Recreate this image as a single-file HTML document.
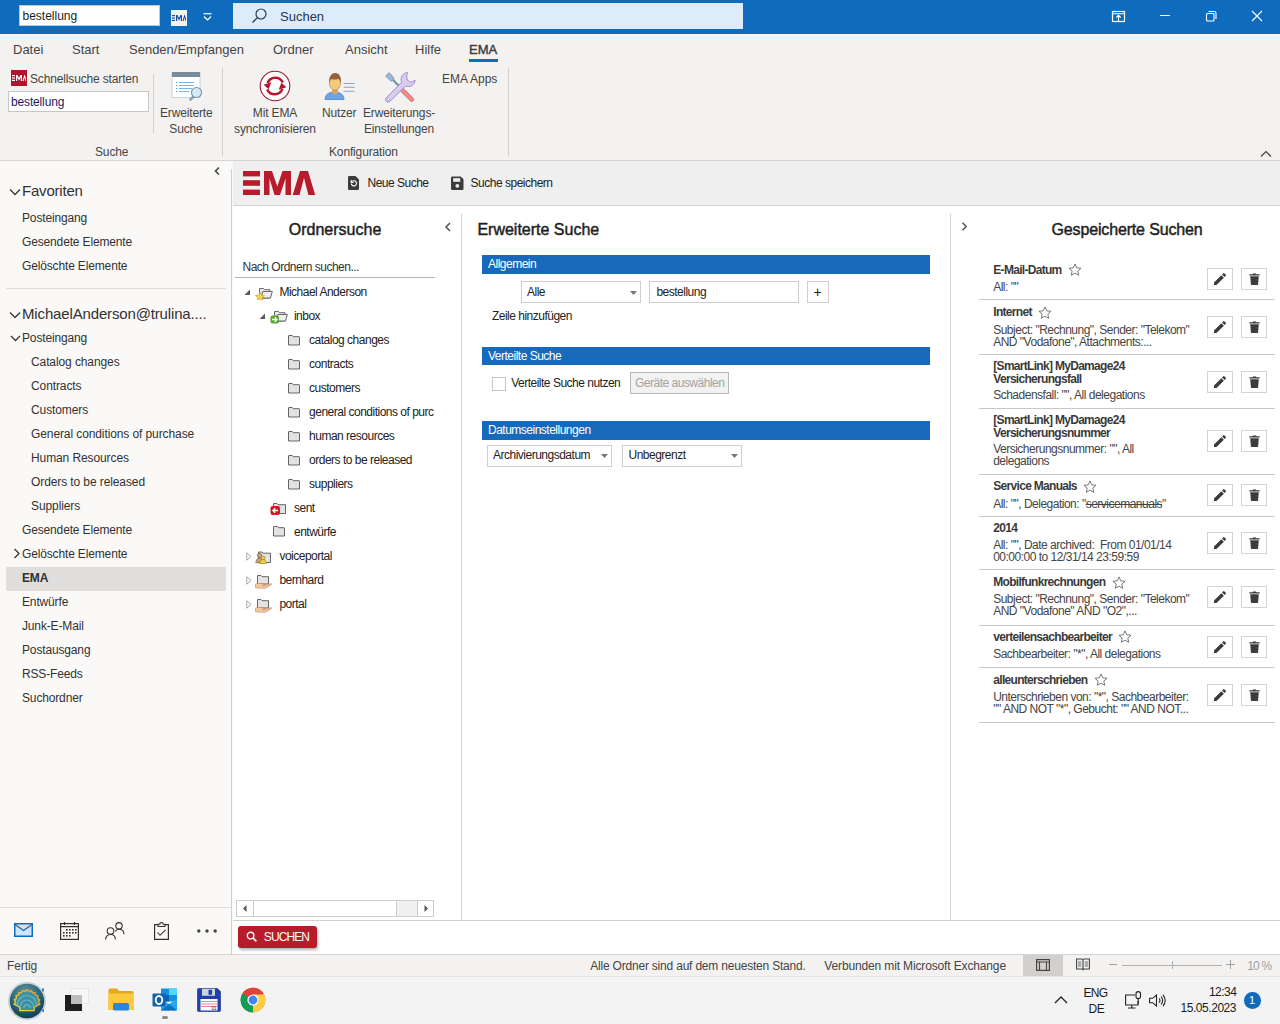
<!DOCTYPE html>
<html><head><meta charset="utf-8">
<style>
*{box-sizing:border-box;margin:0;padding:0}
html,body{width:1280px;height:1024px;overflow:hidden;background:#fff;font-family:"Liberation Sans",sans-serif;color:#262626}
.a{position:absolute;white-space:nowrap}
#title{position:absolute;left:0;top:0;width:1280px;height:34px;background:#0f6cbd}
#tabs{position:absolute;left:0;top:34px;width:1280px;height:30px;background:#f3f2f1}
#ribbon{position:absolute;left:0;top:64px;width:1280px;height:97px;background:#f3f2f1;border-bottom:1px solid #d6d5d4}
#nav{position:absolute;left:0;top:161px;width:233px;height:793px;background:#faf9f8}
#ema{position:absolute;left:233px;top:161px;width:1047px;height:793px;background:#fff}
#status{position:absolute;left:0;top:954px;width:1280px;height:22px;background:#f3f2f1;border-top:1px solid #d6d5d4}
#taskbar{position:absolute;left:0;top:976px;width:1280px;height:48px;background:#f3f3f3}
.tb{top:8px;font-size:13px;color:#444}
.rb{font-size:12px;color:#444;letter-spacing:-0.15px}
.seg{font-size:13px;color:#262626}
.nv{font-size:13px;color:#323130}
.ar{font-size:12px;color:#333}
</style></head><body>
<div id="title">
 <div class="a" style="left:19px;top:5px;width:141px;height:21px;background:#fff;border:1px solid #c8c6c4"></div>
 <div class="a" style="left:22.5px;top:10px;font-size:12px;line-height:12px;color:#201f1e">bestellung</div>
 <div class="a" style="left:171px;top:10px;width:16px;height:16px;background:#f3f2f1"></div>
 <svg class="a" style="left:172px;top:15px" width="14" height="6" viewBox="0 0 14 6"><g fill="#1a4fa0"><rect x="0" y="0" width="3" height="1.2"/><rect x="0" y="2.4" width="3" height="1.2"/><rect x="0" y="4.8" width="3" height="1.2"/><path d="M4 6V0h1.5l1.5 3 1.5-3H10v6H8.8V2.2L7 5.5 5.2 2.2V6z"/><path d="M10.5 6l1.8-6h0.6l1.8 6h-1.2l-0.9-3.5-0.9 3.5z"/></g></svg>
 <svg class="a" style="left:203px;top:13px" width="9" height="8" viewBox="0 0 9 8"><path d="M0.5 0.7h8" stroke="#fff" stroke-width="1.2"/><path d="M1 3.5l3.5 3.5 3.5-3.5" stroke="#fff" stroke-width="1.2" fill="none"/></svg>
 <div class="a" style="left:233px;top:3px;width:510px;height:26px;background:#deecf9"></div>
 <svg class="a" style="left:250px;top:7px" width="20" height="18" viewBox="0 0 20 18"><circle cx="11" cy="7" r="5" stroke="#2a3f58" stroke-width="1.2" fill="none"/><path d="M7.4 10.6L2.5 15.5" stroke="#2a3f58" stroke-width="1.3"/></svg>
 <div class="a" style="left:280px;top:9px;font-size:13px;color:#1f3553">Suchen</div>
 <svg class="a" style="left:1111px;top:10px" width="16" height="13" viewBox="0 0 16 13"><rect x="1.5" y="1.5" width="12" height="10" stroke="#fff" stroke-width="1.2" fill="none"/><path d="M1.5 3.7h12M7.5 11.5V5.5M5.3 7.5l2.2-2.2 2.2 2.2" stroke="#fff" stroke-width="1.1" fill="none"/></svg>
 <div class="a" style="left:1160px;top:15px;width:10px;height:1px;background:#fff"></div>
 <svg class="a" style="left:1205px;top:10px" width="13" height="12" viewBox="0 0 13 12"><rect x="1.5" y="3.5" width="7.5" height="7.5" rx="1" stroke="#fff" stroke-width="1.1" fill="none"/><path d="M3.5 1.5h5.5a2 2 0 0 1 2 2v5.5" stroke="#fff" stroke-width="1.1" fill="none"/></svg>
 <svg class="a" style="left:1251px;top:10px" width="12" height="12" viewBox="0 0 12 12"><path d="M1 1l10 10M11 1L1 11" stroke="#fff" stroke-width="1.1"/></svg>
</div>
<div id="tabs">
 <div class="a tb" style="left:13px">Datei</div>
 <div class="a tb" style="left:72px">Start</div>
 <div class="a tb" style="left:129px">Senden/Empfangen</div>
 <div class="a tb" style="left:273px">Ordner</div>
 <div class="a tb" style="left:345px">Ansicht</div>
 <div class="a tb" style="left:415px">Hilfe</div>
 <div class="a tb" style="left:469px;color:#3b3b3b;-webkit-text-stroke:0.4px #3b3b3b;top:8px">EMA</div>
 <div class="a" style="left:469px;top:25px;width:29px;height:3px;background:#0f6cbd"></div>
</div>
<div id="ribbon">
 <div class="a" style="left:11px;top:6px;width:16px;height:16px;background:#b3122e"></div>
 <svg class="a" style="left:12px;top:11px" width="14" height="6" viewBox="0 0 14 6"><g fill="#fff"><rect x="0" y="0" width="3" height="1.2"/><rect x="0" y="2.4" width="3" height="1.2"/><rect x="0" y="4.8" width="3" height="1.2"/><path d="M4 6V0h1.5l1.5 3 1.5-3H10v6H8.8V2.2L7 5.5 5.2 2.2V6z"/><path d="M10.5 6l1.8-6h0.6l1.8 6h-1.2l-0.9-3.5-0.9 3.5z"/></g></svg>
 <div class="a rb" style="left:30px;top:7.5px">Schnellsuche starten</div>
 <div class="a" style="left:8px;top:27px;width:141px;height:21px;background:#fff;border:1px solid #c8c6c4"></div>
 <div class="a rb" style="left:11px;top:31px;color:#1b1b5e">bestellung</div>
 <div class="a" style="left:153px;top:10px;width:1px;height:59px;background:#d2d0ce"></div>
 <svg class="a" style="left:171px;top:8px" width="32" height="31" viewBox="0 0 32 31"><rect x="1" y="0.5" width="28" height="25" fill="#fff" stroke="#c9d2dc"/><rect x="1" y="0" width="28" height="5" fill="#7a8b9c"/><g fill="#5b9bd5"><rect x="5" y="10" width="1.2" height="1.2"/><rect x="5" y="13" width="1.2" height="1.2"/><rect x="5" y="16" width="1.2" height="1.2"/><rect x="5" y="19" width="1.2" height="1.2"/></g><g stroke="#7fb1e3" stroke-width="1.1"><path d="M8 10.5h15M8 13.5h15M8 16.5h13M8 19.5h10"/></g><path d="M19.5 27.5l3.5-3.5" stroke="#8aa0b3" stroke-width="2.6" stroke-linecap="round"/><circle cx="25.5" cy="20.5" r="5" fill="#d4eafb" stroke="#7c93a8" stroke-width="1.1"/></svg>
 <div class="a rb" style="left:160px;top:41px;width:52px;text-align:center;line-height:16px">Erweiterte<br>Suche</div>
 <div class="a rb" style="left:95px;top:81px">Suche</div>
 <div class="a" style="left:222px;top:4px;width:1px;height:88px;background:#d2d0ce"></div>
 <svg class="a" style="left:259px;top:6px" width="32" height="32" viewBox="0 0 32 32"><circle cx="16" cy="16" r="14.8" fill="#fff" stroke="#a0182c" stroke-width="1.1"/><path d="M8.6 13.2A8.2 8.2 0 0 1 23.8 12.6" stroke="#b8152b" stroke-width="2.5" fill="none"/><path d="M4.6 14.8L12.4 12.2 9.6 19.2z" fill="#b8152b"/><path d="M23.4 18.8A8.2 8.2 0 0 1 8.2 19.4" stroke="#b8152b" stroke-width="2.5" fill="none"/><path d="M27.4 17.2L19.6 19.8 22.4 12.8z" fill="#b8152b"/></svg>
 <div class="a rb" style="left:232px;top:41px;width:86px;text-align:center;line-height:16px">Mit EMA<br>synchronisieren</div>
 <svg class="a" style="left:324px;top:7px" width="32" height="30" viewBox="0 0 32 30"><path d="M1 28.5c0-4 2.5-6.5 6-7h7c3.5 0.5 6 3 6 7z" fill="#6aa3e6" stroke="#3f7ec4" stroke-width="0.7"/><path d="M8 18.5h6v3.5l-3 2-3-2z" fill="#d9a560"/><ellipse cx="11" cy="12" rx="5.6" ry="7" fill="#f3c97c" stroke="#c08a45" stroke-width="0.7"/><path d="M5.2 12.5c-0.8-6 2-10.5 5.8-10.5s6.8 3 5.8 10.5c-0.5-2.5-1.5-4.2-2.5-4.8-2 1-4.5 1.2-7 0.3-1 0.8-1.8 2.3-2.1 4.5z" fill="#93603a"/><path d="M19.5 12.5h11M19.5 16.3h11M19.5 20.2h11" stroke="#8ba3bb" stroke-width="1.1"/></svg>
 <div class="a rb" style="left:322px;top:42px">Nutzer</div>
 <svg class="a" style="left:384px;top:7px" width="32" height="32" viewBox="0 0 32 32"><path d="M2.3 4.2L4.2 2.3a1.3 1.3 0 0 1 1.8 0l4.3 5-3 3-5-4.3a1.3 1.3 0 0 1 0-1.8z" fill="#9fb8d0" stroke="#6f8fae" stroke-width="0.7"/><path d="M8.8 8.8l8 8" stroke="#6f8fae" stroke-width="2"/><path d="M16.5 14.5l12.8 12.8a2 2 0 0 1-2.8 2.8L13.7 17.3z" fill="#ef8a8a" stroke="#cc5b5b" stroke-width="0.7"/><path d="M23.5 1.5a7 7 0 0 0-5.8 9.8L2.3 26.7a2.6 2.6 0 0 0 3.7 3.7L21.4 15a7 7 0 0 0 9.8-5.8l-4.4 2.3-3.6-2.5-0.5-4z" fill="#d8ccf0" stroke="#9a86ca" stroke-width="0.9"/><circle cx="4.4" cy="28.3" r="1.3" fill="#fff" stroke="#9a86ca" stroke-width="0.6"/></svg>
 <div class="a rb" style="left:363px;top:41px;width:72px;text-align:center;line-height:16px">Erweiterungs-<br>Einstellungen</div>
 <div class="a rb" style="left:442px;top:8px;letter-spacing:0">EMA Apps</div>
 <div class="a rb" style="left:329px;top:81px">Konfiguration</div>
 <div class="a" style="left:508px;top:4px;width:1px;height:88px;background:#d2d0ce"></div>
 <svg class="a" style="left:1260px;top:85.5px" width="12" height="8" viewBox="0 0 12 8"><path d="M1 6.5l5-5 5 5" stroke="#444" stroke-width="1.2" fill="none"/></svg>
</div>
<div id="nav"></div>
<div id="status"></div>
<div id="taskbar"></div>
<div id="navw"><svg class="a" style="left:213px;top:166px" width="8" height="10" viewBox="0 0 8 10"><path d="M6 1.5L2.5 5 6 8.5" stroke="#444" stroke-width="1.6" fill="none"/></svg>
<svg class="a" style="left:9px;top:188px" width="12" height="8" viewBox="0 0 12 8"><path d="M1 1.5l5 5 5-5" stroke="#3a3a3a" stroke-width="1.35" fill="none"/></svg>
<div class="a " style="left:22px;top:183.30px;font-size:15px;line-height:15px;color:#323130;letter-spacing:-0.2px">Favoriten</div>
<div class="a " style="left:22px;top:211.84px;font-size:12px;line-height:12px;color:#323130;letter-spacing:-0.15px">Posteingang</div>
<div class="a " style="left:22px;top:235.84px;font-size:12px;line-height:12px;color:#323130;letter-spacing:-0.15px">Gesendete Elemente</div>
<div class="a " style="left:22px;top:259.84px;font-size:12px;line-height:12px;color:#323130;letter-spacing:-0.15px">Gelöschte Elemente</div>
<div class="a" style="left:6px;top:288px;width:220px;height:1px;background:#e1dfdd;"></div>
<svg class="a" style="left:9px;top:310.5px" width="12" height="8" viewBox="0 0 12 8"><path d="M1 1.5l5 5 5-5" stroke="#3a3a3a" stroke-width="1.35" fill="none"/></svg>
<div class="a " style="left:22px;top:306.30px;font-size:15px;line-height:15px;color:#323130;letter-spacing:-0.15px">MichaelAnderson@trulina....</div>
<svg class="a" style="left:10px;top:335px" width="11" height="7" viewBox="0 0 11 7"><path d="M1 1l4.5 4.5L10 1" stroke="#3a3a3a" stroke-width="1.35" fill="none"/></svg>
<div class="a " style="left:22px;top:331.84px;font-size:12px;line-height:12px;color:#323130;letter-spacing:-0.15px">Posteingang</div>
<div class="a " style="left:31px;top:355.84px;font-size:12px;line-height:12px;color:#323130;letter-spacing:-0.1px">Catalog changes</div>
<div class="a " style="left:31px;top:379.84px;font-size:12px;line-height:12px;color:#323130;letter-spacing:-0.1px">Contracts</div>
<div class="a " style="left:31px;top:403.84px;font-size:12px;line-height:12px;color:#323130;letter-spacing:-0.1px">Customers</div>
<div class="a " style="left:31px;top:427.84px;font-size:12px;line-height:12px;color:#323130;letter-spacing:-0.1px">General conditions of purchase</div>
<div class="a " style="left:31px;top:451.84px;font-size:12px;line-height:12px;color:#323130;letter-spacing:-0.1px">Human Resources</div>
<div class="a " style="left:31px;top:475.84px;font-size:12px;line-height:12px;color:#323130;letter-spacing:-0.1px">Orders to be released</div>
<div class="a " style="left:31px;top:499.84px;font-size:12px;line-height:12px;color:#323130;letter-spacing:-0.1px">Suppliers</div>
<div class="a" style="left:6px;top:567px;width:220px;height:24px;background:#e1dfdd;"></div>
<div class="a " style="left:22px;top:523.84px;font-size:12px;line-height:12px;color:#323130;letter-spacing:-0.15px">Gesendete Elemente</div>
<div class="a " style="left:22px;top:547.84px;font-size:12px;line-height:12px;color:#323130;letter-spacing:-0.15px">Gelöschte Elemente</div>
<div class="a " style="left:22px;top:571.84px;font-size:12px;line-height:12px;color:#323130;letter-spacing:-0.15px"><b>EMA</b></div>
<div class="a " style="left:22px;top:595.84px;font-size:12px;line-height:12px;color:#323130;letter-spacing:-0.15px">Entwürfe</div>
<div class="a " style="left:22px;top:619.84px;font-size:12px;line-height:12px;color:#323130;letter-spacing:-0.15px">Junk-E-Mail</div>
<div class="a " style="left:22px;top:643.84px;font-size:12px;line-height:12px;color:#323130;letter-spacing:-0.15px">Postausgang</div>
<div class="a " style="left:22px;top:667.84px;font-size:12px;line-height:12px;color:#323130;letter-spacing:-0.15px">RSS-Feeds</div>
<div class="a " style="left:22px;top:691.84px;font-size:12px;line-height:12px;color:#323130;letter-spacing:-0.15px">Suchordner</div>
<svg class="a" style="left:13px;top:548px" width="7" height="11" viewBox="0 0 7 11"><path d="M1.5 1l4.5 4.5L1.5 10" stroke="#3a3a3a" stroke-width="1.35" fill="none"/></svg>
<div class="a" style="left:0px;top:907px;width:231px;height:1px;background:#e1dfdd;"></div>
<svg class="a" style="left:14px;top:923px" width="19" height="15" viewBox="0 0 19 15"><rect x="0.75" y="0.75" width="17.5" height="12.5" fill="#cfe4fa" stroke="#0f6cbd" stroke-width="1.5"/><path d="M1 1.5l8.5 6 8.5-6" stroke="#0f6cbd" stroke-width="1.3" fill="none"/></svg>
<svg class="a" style="left:60px;top:922px" width="19" height="18" viewBox="0 0 19 18"><rect x="0.6" y="1.6" width="17.8" height="15.8" fill="none" stroke="#323130" stroke-width="1.2"/><path d="M0.6 4.6h17.8M4.5 0v3M14.5 0v3" stroke="#323130" stroke-width="1.2"/><g fill="#323130"><rect x="6" y="7" width="1.6" height="1.6"/><rect x="9" y="7" width="1.6" height="1.6"/><rect x="12" y="7" width="1.6" height="1.6"/><rect x="15" y="7" width="1.6" height="1.6"/><rect x="3" y="10" width="1.6" height="1.6"/><rect x="6" y="10" width="1.6" height="1.6"/><rect x="9" y="10" width="1.6" height="1.6"/><rect x="12" y="10" width="1.6" height="1.6"/><rect x="15" y="10" width="1.6" height="1.6"/><rect x="3" y="13" width="1.6" height="1.6"/><rect x="6" y="13" width="1.6" height="1.6"/><rect x="9" y="13" width="1.6" height="1.6"/></g></svg>
<svg class="a" style="left:105px;top:922px" width="20" height="18" viewBox="0 0 20 18"><circle cx="5.5" cy="9" r="3.3" fill="none" stroke="#323130" stroke-width="1.1"/><path d="M0.6 17.5c0-3 2-5 4.9-5s4.9 2 4.9 5" fill="none" stroke="#323130" stroke-width="1.1"/><circle cx="14" cy="3.8" r="3.2" fill="none" stroke="#323130" stroke-width="1.1"/><path d="M10.2 9.5c0.8-1.5 2.2-2.3 3.8-2.3 2.9 0 4.9 2 4.9 5" fill="none" stroke="#323130" stroke-width="1.1"/></svg>
<svg class="a" style="left:154px;top:922px" width="15" height="18" viewBox="0 0 15 18"><path d="M4 2.6H0.6v14.8h13.8V2.6H11" fill="none" stroke="#323130" stroke-width="1.2"/><path d="M4 4.5V2.2h1.8a1.7 1.7 0 0 1 3.4 0H11v2.3z" fill="none" stroke="#323130" stroke-width="1.1"/><path d="M3.5 10.5l2.5 2.8 5.5-5.5" fill="none" stroke="#323130" stroke-width="1.1"/></svg>
<svg class="a" style="left:196px;top:928px" width="22" height="6" viewBox="0 0 22 6"><circle cx="2.8" cy="3" r="1.7" fill="#444"/><circle cx="11" cy="3" r="1.7" fill="#444"/><circle cx="19.2" cy="3" r="1.7" fill="#444"/></svg></div>
<div id="ema"></div>
<div id="emaw">
<div class="a" style="left:231px;top:169px;width:1px;height:785px;background:#d2d0ce;"></div>
<div class="a" style="left:233px;top:161px;width:1047px;height:44px;background:#efefef;"></div>
<div class="a" style="left:233px;top:205px;width:1047px;height:1px;background:#d4d4d4;"></div>
<svg class="a" style="left:243px;top:171px" width="73" height="24" viewBox="0 0 73 24"><g fill="#b81c2c"><rect x="0" y="0" width="17" height="5.4"/><rect x="0" y="9.2" width="17" height="5.6"/><rect x="0" y="18.6" width="17" height="5.4"/><path d="M21 24V0h8l5.3 15.5L39.5 0H48v24h-5.5V7.5L37 24h-5.5L26.5 7.5V24z"/><path d="M49.7 24L57 0h8l7.2 24h-6.8L61 7 56.5 24z"/></g></svg>
<svg class="a" style="left:348px;top:176px" width="12" height="14" viewBox="0 0 12 14"><path d="M1.2 0h6.3L11 3.5v9.3a1.2 1.2 0 0 1-1.2 1.2H1.2A1.2 1.2 0 0 1 0 12.8V1.2A1.2 1.2 0 0 1 1.2 0z" fill="#3c3c3c"/><path d="M3.3 7.6a2.6 2.6 0 1 0 0.9-2.2" fill="none" stroke="#fff" stroke-width="1.1"/><path d="M3.2 4v2.4h2.4" fill="none" stroke="#fff" stroke-width="1.1"/></svg>
<div class="a " style="left:367.5px;top:177.04px;font-size:12px;line-height:12px;color:#222;letter-spacing:-0.5px;">Neue Suche</div>
<svg class="a" style="left:451px;top:176px" width="13" height="14" viewBox="0 0 13 14"><path d="M1.2 0.5h8.5l2.8 2.8v9.5a1.2 1.2 0 0 1-1.2 1.2H1.2A1.2 1.2 0 0 1 0 12.8V1.7A1.2 1.2 0 0 1 1.2 0.5z" fill="#3c3c3c"/><rect x="2.2" y="2.2" width="7" height="3.6" fill="#efefef"/><circle cx="6.3" cy="9.8" r="1.9" fill="#efefef"/></svg>
<div class="a " style="left:470.6px;top:177.04px;font-size:12px;line-height:12px;color:#222;letter-spacing:-0.5px;">Suche speichern</div>
<div class="a " style="left:288.8px;top:222.46px;font-size:16px;line-height:16px;color:#1e1e1e;letter-spacing:-0.5px;-webkit-text-stroke:0.45px #1e1e1e;letter-spacing:0px">Ordnersuche</div>
<svg class="a" style="left:444px;top:222px" width="8" height="10" viewBox="0 0 8 10"><path d="M6 1L2 5l4 4" stroke="#555" stroke-width="1.6" fill="none"/></svg>
<div class="a" style="left:461px;top:214px;width:1px;height:706px;background:#d2d0ce;"></div>
<div class="a " style="left:242.5px;top:260.84px;font-size:12px;line-height:12px;color:#333;letter-spacing:-0.5px;">Nach Ordnern suchen...</div>
<div class="a" style="left:235px;top:277px;width:200px;height:1px;background:#b4b4b4;"></div>
<svg class="a" style="left:244px;top:289px" width="7" height="7" viewBox="0 0 7 7"><path d="M6 0.5V6H0.5z" fill="#595959"/></svg>
<svg class="a" style="left:255px;top:286px" width="18" height="14" viewBox="0 0 18 14"><path d="M4.5 12V2.5h4l1 1.2h5.5V12z" fill="#e8e8e8" stroke="#5a5a5a" stroke-width="0.9"/><path d="M6 12l1.8-6.5h9.5L15.5 12z" fill="#f0f0f0" stroke="#5a5a5a" stroke-width="0.9"/><path d="M5 6.2l1.4 2.9 3.2 0.5-2.3 2.2 0.5 3.2-2.8-1.5-2.8 1.5 0.5-3.2L0.4 9.6l3.2-0.5z" fill="#f7d44c" stroke="#b8962a" stroke-width="0.6"/></svg>
<div class="a " style="left:279.4px;top:285.84px;font-size:12px;line-height:12px;color:#222;letter-spacing:-0.5px;">Michael Anderson</div>
<svg class="a" style="left:259px;top:313px" width="7" height="7" viewBox="0 0 7 7"><path d="M6 0.5V6H0.5z" fill="#595959"/></svg>
<svg class="a" style="left:270px;top:310px" width="18" height="14" viewBox="0 0 18 14"><path d="M4.5 11V1.5h4l1 1.2h5.5V11z" fill="#e8e8e8" stroke="#5a5a5a" stroke-width="0.9"/><path d="M6 11l1.8-6.5h9.5L15.5 11z" fill="#f0f0f0" stroke="#5a5a5a" stroke-width="0.9"/><rect x="0.5" y="5.5" width="8.5" height="8" rx="2" fill="#5aa83a"/><path d="M2 9.5h4.5M4.8 7.3l2.2 2.2-2.2 2.2" stroke="#fff" stroke-width="1.3" fill="none"/></svg>
<div class="a " style="left:293.9px;top:309.84px;font-size:12px;line-height:12px;color:#222;letter-spacing:-0.5px;">inbox</div>
<svg class="a" style="left:288px;top:335px" width="12" height="11" viewBox="0 0 12 11"><path d="M0.5 10V1a0.5 0.5 0 0 1 0.5-0.5h3.3l1 1.2H11a0.5 0.5 0 0 1 0.5 0.5V10z" fill="#e3e3e3" stroke="#555" stroke-width="0.9"/></svg>
<div class="a " style="left:309.1px;top:333.54px;font-size:12px;line-height:12px;color:#222;letter-spacing:-0.5px;">catalog changes</div>
<svg class="a" style="left:288px;top:359px" width="12" height="11" viewBox="0 0 12 11"><path d="M0.5 10V1a0.5 0.5 0 0 1 0.5-0.5h3.3l1 1.2H11a0.5 0.5 0 0 1 0.5 0.5V10z" fill="#e3e3e3" stroke="#555" stroke-width="0.9"/></svg>
<div class="a " style="left:309.1px;top:357.54px;font-size:12px;line-height:12px;color:#222;letter-spacing:-0.5px;">contracts</div>
<svg class="a" style="left:288px;top:383px" width="12" height="11" viewBox="0 0 12 11"><path d="M0.5 10V1a0.5 0.5 0 0 1 0.5-0.5h3.3l1 1.2H11a0.5 0.5 0 0 1 0.5 0.5V10z" fill="#e3e3e3" stroke="#555" stroke-width="0.9"/></svg>
<div class="a " style="left:309.1px;top:381.54px;font-size:12px;line-height:12px;color:#222;letter-spacing:-0.5px;">customers</div>
<svg class="a" style="left:288px;top:407px" width="12" height="11" viewBox="0 0 12 11"><path d="M0.5 10V1a0.5 0.5 0 0 1 0.5-0.5h3.3l1 1.2H11a0.5 0.5 0 0 1 0.5 0.5V10z" fill="#e3e3e3" stroke="#555" stroke-width="0.9"/></svg>
<div class="a " style="left:309.1px;top:405.54px;font-size:12px;line-height:12px;color:#222;letter-spacing:-0.5px;">general conditions of purc</div>
<svg class="a" style="left:288px;top:431px" width="12" height="11" viewBox="0 0 12 11"><path d="M0.5 10V1a0.5 0.5 0 0 1 0.5-0.5h3.3l1 1.2H11a0.5 0.5 0 0 1 0.5 0.5V10z" fill="#e3e3e3" stroke="#555" stroke-width="0.9"/></svg>
<div class="a " style="left:309.1px;top:429.54px;font-size:12px;line-height:12px;color:#222;letter-spacing:-0.5px;">human resources</div>
<svg class="a" style="left:288px;top:455px" width="12" height="11" viewBox="0 0 12 11"><path d="M0.5 10V1a0.5 0.5 0 0 1 0.5-0.5h3.3l1 1.2H11a0.5 0.5 0 0 1 0.5 0.5V10z" fill="#e3e3e3" stroke="#555" stroke-width="0.9"/></svg>
<div class="a " style="left:309.1px;top:453.54px;font-size:12px;line-height:12px;color:#222;letter-spacing:-0.5px;">orders to be released</div>
<svg class="a" style="left:288px;top:479px" width="12" height="11" viewBox="0 0 12 11"><path d="M0.5 10V1a0.5 0.5 0 0 1 0.5-0.5h3.3l1 1.2H11a0.5 0.5 0 0 1 0.5 0.5V10z" fill="#e3e3e3" stroke="#555" stroke-width="0.9"/></svg>
<div class="a " style="left:309.1px;top:477.54px;font-size:12px;line-height:12px;color:#222;letter-spacing:-0.5px;">suppliers</div>
<svg class="a" style="left:270px;top:503px" width="16" height="13" viewBox="0 0 16 13"><path d="M3.5 10.5V0.5h3.5l1 1.2h7.5v8.8z" fill="#e3e3e3" stroke="#555" stroke-width="0.9"/><rect x="0.5" y="3" width="9.5" height="9" rx="2.2" fill="#d9141e"/><path d="M8 7.5H3M5.2 5.2L3 7.5l2.2 2.3" stroke="#fff" stroke-width="1.5" fill="none"/></svg>
<div class="a " style="left:294px;top:502.24px;font-size:12px;line-height:12px;color:#222;letter-spacing:-0.5px;">sent</div>
<svg class="a" style="left:273px;top:526px" width="12" height="11" viewBox="0 0 12 11"><path d="M0.5 10V1a0.5 0.5 0 0 1 0.5-0.5h3.3l1 1.2H11a0.5 0.5 0 0 1 0.5 0.5V10z" fill="#e3e3e3" stroke="#555" stroke-width="0.9"/></svg>
<div class="a " style="left:294px;top:526.24px;font-size:12px;line-height:12px;color:#222;letter-spacing:-0.5px;">entwürfe</div>
<svg class="a" style="left:246px;top:552px" width="6" height="9" viewBox="0 0 6 9"><path d="M0.8 0.8L5 4.5 0.8 8.2z" fill="#fff" stroke="#a6a6a6" stroke-width="1"/></svg>
<svg class="a" style="left:255px;top:551px" width="16" height="13" viewBox="0 0 16 13"><path d="M3.5 11.5V1h3.5l1 1.2h7.5v9.3z" fill="#e3e3e3" stroke="#555" stroke-width="0.9"/><circle cx="4.5" cy="4.5" r="2.2" fill="#c9a37a" stroke="#6b5233" stroke-width="0.6"/><path d="M0.8 11.8c0-3 1.6-4.8 3.7-4.8s3.7 1.8 3.7 4.8z" fill="#c9a37a" stroke="#6b5233" stroke-width="0.6"/><circle cx="8" cy="7" r="2" fill="#f2d23c" stroke="#8a7420" stroke-width="0.6"/><path d="M4.8 12.5c0-2.6 1.4-4 3.2-4s3.2 1.4 3.2 4z" fill="#f2d23c" stroke="#8a7420" stroke-width="0.6"/></svg>
<div class="a " style="left:279.4px;top:550.34px;font-size:12px;line-height:12px;color:#222;letter-spacing:-0.5px;">voiceportal</div>
<svg class="a" style="left:246px;top:576px" width="6" height="9" viewBox="0 0 6 9"><path d="M0.8 0.8L5 4.5 0.8 8.2z" fill="#fff" stroke="#a6a6a6" stroke-width="1"/></svg>
<svg class="a" style="left:255px;top:575px" width="17" height="14" viewBox="0 0 17 14"><path d="M2.5 9V0.5h3.5l1 1.2h6.5V9z" fill="#e3e3e3" stroke="#555" stroke-width="0.9"/><path d="M0.5 9.2c1.5-1 3.5-1.2 5.5-0.6l3.5 0.6c1 0.2 1 1 0 1.1L7 10.5l4.5-0.2 4.6-1.7c0.7 0 0.9 0.6 0.3 1L12 12.5c-1.5 0.8-3 1-4.5 0.8L0.5 12.8z" fill="#f5c9a0" stroke="#c2825a" stroke-width="0.6"/></svg>
<div class="a " style="left:279.4px;top:574.34px;font-size:12px;line-height:12px;color:#222;letter-spacing:-0.5px;">bernhard</div>
<svg class="a" style="left:246px;top:600px" width="6" height="9" viewBox="0 0 6 9"><path d="M0.8 0.8L5 4.5 0.8 8.2z" fill="#fff" stroke="#a6a6a6" stroke-width="1"/></svg>
<svg class="a" style="left:255px;top:599px" width="17" height="14" viewBox="0 0 17 14"><path d="M2.5 9V0.5h3.5l1 1.2h6.5V9z" fill="#e3e3e3" stroke="#555" stroke-width="0.9"/><path d="M0.5 9.2c1.5-1 3.5-1.2 5.5-0.6l3.5 0.6c1 0.2 1 1 0 1.1L7 10.5l4.5-0.2 4.6-1.7c0.7 0 0.9 0.6 0.3 1L12 12.5c-1.5 0.8-3 1-4.5 0.8L0.5 12.8z" fill="#f5c9a0" stroke="#c2825a" stroke-width="0.6"/></svg>
<div class="a " style="left:279.4px;top:598.34px;font-size:12px;line-height:12px;color:#222;letter-spacing:-0.5px;">portal</div>
<div class="a" style="left:236px;top:900px;width:198px;height:17px;background:#f0f0f0;border:1px solid #cdcdcd"></div>
<div class="a" style="left:236px;top:900px;width:18px;height:17px;background:#fff;border:1px solid #cdcdcd"></div>
<div class="a" style="left:253px;top:900px;width:144px;height:17px;background:#fff;border:1px solid #cdcdcd"></div>
<div class="a" style="left:417px;top:900px;width:17px;height:17px;background:#fff;border:1px solid #cdcdcd"></div>
<svg class="a" style="left:243px;top:905px" width="4" height="7" viewBox="0 0 4 7"><path d="M3.5 0v7L0 3.5z" fill="#555"/></svg>
<svg class="a" style="left:424px;top:905px" width="4" height="7" viewBox="0 0 4 7"><path d="M0.5 0v7L4 3.5z" fill="#555"/></svg>
<div class="a" style="left:233px;top:920px;width:1047px;height:1px;background:#d2d0ce;"></div>
<div class="a" style="left:238px;top:926px;width:79px;height:22px;background:#b71c2b;border-radius:3px;box-shadow:1px 2px 3px rgba(0,0,0,0.3)"></div>
<svg class="a" style="left:246px;top:931px" width="12" height="12" viewBox="0 0 12 12"><circle cx="4.6" cy="4.6" r="3.3" stroke="#fff" stroke-width="1.4" fill="none"/><path d="M7 7l3.4 3.4" stroke="#fff" stroke-width="1.7"/></svg>
<div class="a " style="left:263.8px;top:930.84px;font-size:12px;line-height:12px;color:#fff;letter-spacing:-0.9px">SUCHEN</div>
</div><!--EMA1END-->
<div id="emaw2">
<div class="a " style="left:477.4px;top:222.46px;font-size:16px;line-height:16px;color:#1e1e1e;letter-spacing:-0.5px;-webkit-text-stroke:0.45px #1e1e1e;letter-spacing:0px">Erweiterte Suche</div>
<div class="a" style="left:482px;top:255px;width:448px;height:19px;background:#176abb;"></div>
<div class="a " style="left:488px;top:257.84px;font-size:12px;line-height:12px;color:#fff;letter-spacing:-0.5px;">Allgemein</div>
<div class="a" style="left:521px;top:281px;width:120px;height:22px;background:#fff;border:1px solid #cfcfcf"></div>
<div class="a " style="left:527px;top:286.34px;font-size:12px;line-height:12px;color:#222;letter-spacing:-0.5px;">Alle</div>
<svg class="a" style="left:630px;top:291px" width="7" height="4" viewBox="0 0 7 4"><path d="M0 0h7L3.5 4z" fill="#777"/></svg>
<div class="a" style="left:649px;top:281px;width:150px;height:22px;background:#fff;border:1px solid #cfcfcf"></div>
<div class="a " style="left:656.4px;top:286.34px;font-size:12px;line-height:12px;color:#222;letter-spacing:-0.5px;">bestellung</div>
<div class="a" style="left:807px;top:281px;width:22px;height:22px;background:#fff;border:1px solid #cfcfcf"></div>
<div class="a " style="left:813.5px;top:285.15px;font-size:14px;line-height:14px;color:#222;">+</div>
<div class="a " style="left:491.9px;top:310.34px;font-size:12px;line-height:12px;color:#222;letter-spacing:-0.5px;">Zeile hinzufügen</div>
<div class="a" style="left:482px;top:347px;width:448px;height:18px;background:#176abb;"></div>
<div class="a " style="left:488px;top:349.84px;font-size:12px;line-height:12px;color:#fff;letter-spacing:-0.5px;">Verteilte Suche</div>
<div class="a" style="left:492px;top:377px;width:14px;height:14px;background:#fff;border:1px solid #c4c4c4"></div>
<div class="a " style="left:511.2px;top:377.34px;font-size:12px;line-height:12px;color:#222;letter-spacing:-0.5px;">Verteilte Suche nutzen</div>
<div class="a" style="left:630px;top:372px;width:99px;height:22px;background:#f2f2f2;border:1px solid #b9b9b9"></div>
<div class="a " style="left:635px;top:377.34px;font-size:12px;line-height:12px;color:#a3a3a3;letter-spacing:-0.5px;">Geräte auswählen</div>
<div class="a" style="left:482px;top:421px;width:448px;height:19px;background:#176abb;"></div>
<div class="a " style="left:488px;top:424.34px;font-size:12px;line-height:12px;color:#fff;letter-spacing:-0.5px;">Datumseinstellungen</div>
<div class="a" style="left:487px;top:445px;width:125px;height:22px;background:#fff;border:1px solid #cfcfcf"></div>
<div class="a " style="left:493px;top:449.34px;font-size:12px;line-height:12px;color:#222;letter-spacing:-0.5px;">Archivierungsdatum</div>
<svg class="a" style="left:601px;top:454px" width="7" height="4" viewBox="0 0 7 4"><path d="M0 0h7L3.5 4z" fill="#777"/></svg>
<div class="a" style="left:622px;top:445px;width:120px;height:22px;background:#fff;border:1px solid #cfcfcf"></div>
<div class="a " style="left:628.5px;top:449.34px;font-size:12px;line-height:12px;color:#222;letter-spacing:-0.5px;">Unbegrenzt</div>
<svg class="a" style="left:731px;top:454px" width="7" height="4" viewBox="0 0 7 4"><path d="M0 0h7L3.5 4z" fill="#777"/></svg>
<div class="a" style="left:950px;top:214px;width:1px;height:706px;background:#d2d0ce;"></div>
<svg class="a" style="left:961px;top:222px" width="7" height="9" viewBox="0 0 7 9"><path d="M1.5 0.8L5.2 4.5 1.5 8.2" stroke="#555" stroke-width="1.5" fill="none"/></svg>
<div class="a " style="left:1051.5px;top:222.16px;font-size:16px;line-height:16px;color:#1e1e1e;letter-spacing:-0.5px;-webkit-text-stroke:0.45px #1e1e1e;letter-spacing:-0.15px">Gespeicherte Suchen</div>
<div class="a " style="left:993.3px;top:263.64px;font-size:12px;line-height:12px;color:#3a3a3a;font-weight:bold;letter-spacing:-0.7px">E-Mail-Datum</div>
<svg class="a" style="left:1068px;top:263px" width="14" height="13" viewBox="0 0 14 13"><path d="M7 0.9l1.75 3.95 4.3 0.4-3.25 2.85 0.95 4.2L7 10.1l-3.75 2.2 0.95-4.2L0.95 5.25l4.3-0.4z" fill="none" stroke="#6a6a6a" stroke-width="0.9"/></svg>
<div class="a " style="left:993.2px;top:280.64px;font-size:12px;line-height:12px;color:#444;letter-spacing:-0.5px">All: ""</div>
<div class="a" style="left:1207px;top:268px;width:26px;height:22px;border:1px solid #d4d4d4;background:#fff;display:flex;align-items:center;justify-content:center"><svg width="16" height="16" viewBox="0 0 24 24"><path d="M3 17.25V21h3.75L17.81 9.94l-3.75-3.75L3 17.25zM20.71 7.04a1 1 0 0 0 0-1.41l-2.34-2.34a1 1 0 0 0-1.41 0l-1.83 1.83 3.75 3.75 1.83-1.83z" fill="#3c3c3c"/></svg></div>
<div class="a" style="left:1241px;top:268px;width:26px;height:22px;border:1px solid #d4d4d4;background:#fff;display:flex;align-items:center;justify-content:center"><svg width="11" height="12" viewBox="0 0 11 12"><path d="M1.2 3.2h8.6l-0.7 8.1a0.8 0.8 0 0 1-0.8 0.7H2.7a0.8 0.8 0 0 1-0.8-0.7z" fill="#3c3c3c"/><path d="M0.3 1.3h3.2L4 0.4h3l0.5 0.9h3.2v1.2H0.3z" fill="#3c3c3c"/></svg></div>
<div class="a" style="left:979px;top:299px;width:296px;height:1px;background:#c8c8c8;"></div>
<div class="a " style="left:993.3px;top:306.34px;font-size:12px;line-height:12px;color:#3a3a3a;font-weight:bold;letter-spacing:-0.7px">Internet</div>
<svg class="a" style="left:1038px;top:306px" width="14" height="13" viewBox="0 0 14 13"><path d="M7 0.9l1.75 3.95 4.3 0.4-3.25 2.85 0.95 4.2L7 10.1l-3.75 2.2 0.95-4.2L0.95 5.25l4.3-0.4z" fill="none" stroke="#6a6a6a" stroke-width="0.9"/></svg>
<div class="a " style="left:993.2px;top:324.14px;font-size:12px;line-height:12px;color:#444;letter-spacing:-0.5px">Subject: "Rechnung", Sender: "Telekom"</div>
<div class="a " style="left:993.2px;top:336.14px;font-size:12px;line-height:12px;color:#444;letter-spacing:-0.5px">AND "Vodafone", Attachments:...</div>
<div class="a" style="left:1207px;top:316px;width:26px;height:22px;border:1px solid #d4d4d4;background:#fff;display:flex;align-items:center;justify-content:center"><svg width="16" height="16" viewBox="0 0 24 24"><path d="M3 17.25V21h3.75L17.81 9.94l-3.75-3.75L3 17.25zM20.71 7.04a1 1 0 0 0 0-1.41l-2.34-2.34a1 1 0 0 0-1.41 0l-1.83 1.83 3.75 3.75 1.83-1.83z" fill="#3c3c3c"/></svg></div>
<div class="a" style="left:1241px;top:316px;width:26px;height:22px;border:1px solid #d4d4d4;background:#fff;display:flex;align-items:center;justify-content:center"><svg width="11" height="12" viewBox="0 0 11 12"><path d="M1.2 3.2h8.6l-0.7 8.1a0.8 0.8 0 0 1-0.8 0.7H2.7a0.8 0.8 0 0 1-0.8-0.7z" fill="#3c3c3c"/><path d="M0.3 1.3h3.2L4 0.4h3l0.5 0.9h3.2v1.2H0.3z" fill="#3c3c3c"/></svg></div>
<div class="a" style="left:979px;top:354px;width:296px;height:1px;background:#c8c8c8;"></div>
<div class="a " style="left:993.3px;top:359.64px;font-size:12px;line-height:12px;color:#3a3a3a;font-weight:bold;letter-spacing:-0.7px">[SmartLink] MyDamage24</div>
<div class="a " style="left:993.3px;top:372.64px;font-size:12px;line-height:12px;color:#3a3a3a;font-weight:bold;letter-spacing:-0.7px">Versicherungsfall</div>
<div class="a " style="left:993.2px;top:388.94px;font-size:12px;line-height:12px;color:#444;letter-spacing:-0.5px">Schadensfall: "", All delegations</div>
<div class="a" style="left:1207px;top:371px;width:26px;height:22px;border:1px solid #d4d4d4;background:#fff;display:flex;align-items:center;justify-content:center"><svg width="16" height="16" viewBox="0 0 24 24"><path d="M3 17.25V21h3.75L17.81 9.94l-3.75-3.75L3 17.25zM20.71 7.04a1 1 0 0 0 0-1.41l-2.34-2.34a1 1 0 0 0-1.41 0l-1.83 1.83 3.75 3.75 1.83-1.83z" fill="#3c3c3c"/></svg></div>
<div class="a" style="left:1241px;top:371px;width:26px;height:22px;border:1px solid #d4d4d4;background:#fff;display:flex;align-items:center;justify-content:center"><svg width="11" height="12" viewBox="0 0 11 12"><path d="M1.2 3.2h8.6l-0.7 8.1a0.8 0.8 0 0 1-0.8 0.7H2.7a0.8 0.8 0 0 1-0.8-0.7z" fill="#3c3c3c"/><path d="M0.3 1.3h3.2L4 0.4h3l0.5 0.9h3.2v1.2H0.3z" fill="#3c3c3c"/></svg></div>
<div class="a" style="left:979px;top:408px;width:296px;height:1px;background:#c8c8c8;"></div>
<div class="a " style="left:993.3px;top:413.84px;font-size:12px;line-height:12px;color:#3a3a3a;font-weight:bold;letter-spacing:-0.7px">[SmartLink] MyDamage24</div>
<div class="a " style="left:993.3px;top:426.84px;font-size:12px;line-height:12px;color:#3a3a3a;font-weight:bold;letter-spacing:-0.7px">Versicherungsnummer</div>
<div class="a " style="left:993.2px;top:443.14px;font-size:12px;line-height:12px;color:#444;letter-spacing:-0.5px">Versicherungsnummer: "", All</div>
<div class="a " style="left:993.2px;top:455.14px;font-size:12px;line-height:12px;color:#444;letter-spacing:-0.5px">delegations</div>
<div class="a" style="left:1207px;top:430px;width:26px;height:22px;border:1px solid #d4d4d4;background:#fff;display:flex;align-items:center;justify-content:center"><svg width="16" height="16" viewBox="0 0 24 24"><path d="M3 17.25V21h3.75L17.81 9.94l-3.75-3.75L3 17.25zM20.71 7.04a1 1 0 0 0 0-1.41l-2.34-2.34a1 1 0 0 0-1.41 0l-1.83 1.83 3.75 3.75 1.83-1.83z" fill="#3c3c3c"/></svg></div>
<div class="a" style="left:1241px;top:430px;width:26px;height:22px;border:1px solid #d4d4d4;background:#fff;display:flex;align-items:center;justify-content:center"><svg width="11" height="12" viewBox="0 0 11 12"><path d="M1.2 3.2h8.6l-0.7 8.1a0.8 0.8 0 0 1-0.8 0.7H2.7a0.8 0.8 0 0 1-0.8-0.7z" fill="#3c3c3c"/><path d="M0.3 1.3h3.2L4 0.4h3l0.5 0.9h3.2v1.2H0.3z" fill="#3c3c3c"/></svg></div>
<div class="a" style="left:979px;top:474px;width:296px;height:1px;background:#c8c8c8;"></div>
<div class="a " style="left:993.3px;top:480.24px;font-size:12px;line-height:12px;color:#3a3a3a;font-weight:bold;letter-spacing:-0.7px">Service Manuals</div>
<svg class="a" style="left:1083px;top:480px" width="14" height="13" viewBox="0 0 14 13"><path d="M7 0.9l1.75 3.95 4.3 0.4-3.25 2.85 0.95 4.2L7 10.1l-3.75 2.2 0.95-4.2L0.95 5.25l4.3-0.4z" fill="none" stroke="#6a6a6a" stroke-width="0.9"/></svg>
<div class="a " style="left:993.2px;top:498.34px;font-size:12px;line-height:12px;color:#444;letter-spacing:-0.5px">All: "", Delegation: "<s>servicemanuals</s>"</div>
<div class="a" style="left:1207px;top:484px;width:26px;height:22px;border:1px solid #d4d4d4;background:#fff;display:flex;align-items:center;justify-content:center"><svg width="16" height="16" viewBox="0 0 24 24"><path d="M3 17.25V21h3.75L17.81 9.94l-3.75-3.75L3 17.25zM20.71 7.04a1 1 0 0 0 0-1.41l-2.34-2.34a1 1 0 0 0-1.41 0l-1.83 1.83 3.75 3.75 1.83-1.83z" fill="#3c3c3c"/></svg></div>
<div class="a" style="left:1241px;top:484px;width:26px;height:22px;border:1px solid #d4d4d4;background:#fff;display:flex;align-items:center;justify-content:center"><svg width="11" height="12" viewBox="0 0 11 12"><path d="M1.2 3.2h8.6l-0.7 8.1a0.8 0.8 0 0 1-0.8 0.7H2.7a0.8 0.8 0 0 1-0.8-0.7z" fill="#3c3c3c"/><path d="M0.3 1.3h3.2L4 0.4h3l0.5 0.9h3.2v1.2H0.3z" fill="#3c3c3c"/></svg></div>
<div class="a" style="left:979px;top:516px;width:296px;height:1px;background:#c8c8c8;"></div>
<div class="a " style="left:993.3px;top:522.04px;font-size:12px;line-height:12px;color:#3a3a3a;font-weight:bold;letter-spacing:-0.7px">2014</div>
<div class="a " style="left:993.2px;top:538.84px;font-size:12px;line-height:12px;color:#444;letter-spacing:-0.5px">All: "", Date archived:&nbsp; From 01/01/14</div>
<div class="a " style="left:993.2px;top:550.84px;font-size:12px;line-height:12px;color:#444;letter-spacing:-0.5px">00:00:00 to 12/31/14 23:59:59</div>
<div class="a" style="left:1207px;top:532px;width:26px;height:22px;border:1px solid #d4d4d4;background:#fff;display:flex;align-items:center;justify-content:center"><svg width="16" height="16" viewBox="0 0 24 24"><path d="M3 17.25V21h3.75L17.81 9.94l-3.75-3.75L3 17.25zM20.71 7.04a1 1 0 0 0 0-1.41l-2.34-2.34a1 1 0 0 0-1.41 0l-1.83 1.83 3.75 3.75 1.83-1.83z" fill="#3c3c3c"/></svg></div>
<div class="a" style="left:1241px;top:532px;width:26px;height:22px;border:1px solid #d4d4d4;background:#fff;display:flex;align-items:center;justify-content:center"><svg width="11" height="12" viewBox="0 0 11 12"><path d="M1.2 3.2h8.6l-0.7 8.1a0.8 0.8 0 0 1-0.8 0.7H2.7a0.8 0.8 0 0 1-0.8-0.7z" fill="#3c3c3c"/><path d="M0.3 1.3h3.2L4 0.4h3l0.5 0.9h3.2v1.2H0.3z" fill="#3c3c3c"/></svg></div>
<div class="a" style="left:979px;top:569px;width:296px;height:1px;background:#c8c8c8;"></div>
<div class="a " style="left:993.3px;top:576.14px;font-size:12px;line-height:12px;color:#3a3a3a;font-weight:bold;letter-spacing:-0.7px">Mobilfunkrechnungen</div>
<svg class="a" style="left:1112px;top:576px" width="14" height="13" viewBox="0 0 14 13"><path d="M7 0.9l1.75 3.95 4.3 0.4-3.25 2.85 0.95 4.2L7 10.1l-3.75 2.2 0.95-4.2L0.95 5.25l4.3-0.4z" fill="none" stroke="#6a6a6a" stroke-width="0.9"/></svg>
<div class="a " style="left:993.2px;top:592.94px;font-size:12px;line-height:12px;color:#444;letter-spacing:-0.5px">Subject: "Rechnung", Sender: "Telekom"</div>
<div class="a " style="left:993.2px;top:604.94px;font-size:12px;line-height:12px;color:#444;letter-spacing:-0.5px">AND "Vodafone" AND "O2",...</div>
<div class="a" style="left:1207px;top:586px;width:26px;height:22px;border:1px solid #d4d4d4;background:#fff;display:flex;align-items:center;justify-content:center"><svg width="16" height="16" viewBox="0 0 24 24"><path d="M3 17.25V21h3.75L17.81 9.94l-3.75-3.75L3 17.25zM20.71 7.04a1 1 0 0 0 0-1.41l-2.34-2.34a1 1 0 0 0-1.41 0l-1.83 1.83 3.75 3.75 1.83-1.83z" fill="#3c3c3c"/></svg></div>
<div class="a" style="left:1241px;top:586px;width:26px;height:22px;border:1px solid #d4d4d4;background:#fff;display:flex;align-items:center;justify-content:center"><svg width="11" height="12" viewBox="0 0 11 12"><path d="M1.2 3.2h8.6l-0.7 8.1a0.8 0.8 0 0 1-0.8 0.7H2.7a0.8 0.8 0 0 1-0.8-0.7z" fill="#3c3c3c"/><path d="M0.3 1.3h3.2L4 0.4h3l0.5 0.9h3.2v1.2H0.3z" fill="#3c3c3c"/></svg></div>
<div class="a" style="left:979px;top:625px;width:296px;height:1px;background:#c8c8c8;"></div>
<div class="a " style="left:993.3px;top:630.84px;font-size:12px;line-height:12px;color:#3a3a3a;font-weight:bold;letter-spacing:-0.7px">verteilensachbearbeiter</div>
<svg class="a" style="left:1118px;top:630px" width="14" height="13" viewBox="0 0 14 13"><path d="M7 0.9l1.75 3.95 4.3 0.4-3.25 2.85 0.95 4.2L7 10.1l-3.75 2.2 0.95-4.2L0.95 5.25l4.3-0.4z" fill="none" stroke="#6a6a6a" stroke-width="0.9"/></svg>
<div class="a " style="left:993.2px;top:647.94px;font-size:12px;line-height:12px;color:#444;letter-spacing:-0.5px">Sachbearbeiter: "*", All delegations</div>
<div class="a" style="left:1207px;top:635.5px;width:26px;height:22px;border:1px solid #d4d4d4;background:#fff;display:flex;align-items:center;justify-content:center"><svg width="16" height="16" viewBox="0 0 24 24"><path d="M3 17.25V21h3.75L17.81 9.94l-3.75-3.75L3 17.25zM20.71 7.04a1 1 0 0 0 0-1.41l-2.34-2.34a1 1 0 0 0-1.41 0l-1.83 1.83 3.75 3.75 1.83-1.83z" fill="#3c3c3c"/></svg></div>
<div class="a" style="left:1241px;top:635.5px;width:26px;height:22px;border:1px solid #d4d4d4;background:#fff;display:flex;align-items:center;justify-content:center"><svg width="11" height="12" viewBox="0 0 11 12"><path d="M1.2 3.2h8.6l-0.7 8.1a0.8 0.8 0 0 1-0.8 0.7H2.7a0.8 0.8 0 0 1-0.8-0.7z" fill="#3c3c3c"/><path d="M0.3 1.3h3.2L4 0.4h3l0.5 0.9h3.2v1.2H0.3z" fill="#3c3c3c"/></svg></div>
<div class="a" style="left:979px;top:667px;width:296px;height:1px;background:#c8c8c8;"></div>
<div class="a " style="left:993.3px;top:673.74px;font-size:12px;line-height:12px;color:#3a3a3a;font-weight:bold;letter-spacing:-0.7px">alleunterschrieben</div>
<svg class="a" style="left:1094px;top:673px" width="14" height="13" viewBox="0 0 14 13"><path d="M7 0.9l1.75 3.95 4.3 0.4-3.25 2.85 0.95 4.2L7 10.1l-3.75 2.2 0.95-4.2L0.95 5.25l4.3-0.4z" fill="none" stroke="#6a6a6a" stroke-width="0.9"/></svg>
<div class="a " style="left:993.2px;top:690.94px;font-size:12px;line-height:12px;color:#444;letter-spacing:-0.5px">Unterschrieben von: "*", Sachbearbeiter:</div>
<div class="a " style="left:993.2px;top:702.94px;font-size:12px;line-height:12px;color:#444;letter-spacing:-0.5px">"" AND NOT "*", Gebucht: "" AND NOT...</div>
<div class="a" style="left:1207px;top:684px;width:26px;height:22px;border:1px solid #d4d4d4;background:#fff;display:flex;align-items:center;justify-content:center"><svg width="16" height="16" viewBox="0 0 24 24"><path d="M3 17.25V21h3.75L17.81 9.94l-3.75-3.75L3 17.25zM20.71 7.04a1 1 0 0 0 0-1.41l-2.34-2.34a1 1 0 0 0-1.41 0l-1.83 1.83 3.75 3.75 1.83-1.83z" fill="#3c3c3c"/></svg></div>
<div class="a" style="left:1241px;top:684px;width:26px;height:22px;border:1px solid #d4d4d4;background:#fff;display:flex;align-items:center;justify-content:center"><svg width="11" height="12" viewBox="0 0 11 12"><path d="M1.2 3.2h8.6l-0.7 8.1a0.8 0.8 0 0 1-0.8 0.7H2.7a0.8 0.8 0 0 1-0.8-0.7z" fill="#3c3c3c"/><path d="M0.3 1.3h3.2L4 0.4h3l0.5 0.9h3.2v1.2H0.3z" fill="#3c3c3c"/></svg></div>
<div class="a" style="left:979px;top:722px;width:296px;height:1px;background:#c8c8c8;"></div>
</div><!--EMA2END-->
<div id="bottomw">
<div class="a " style="left:7px;top:960.14px;font-size:12px;line-height:12px;color:#444;letter-spacing:-0.1px">Fertig</div>
<div class="a " style="left:590.2px;top:959.84px;font-size:12px;line-height:12px;color:#444;letter-spacing:-0.2px">Alle Ordner sind auf dem neuesten Stand.</div>
<div class="a " style="left:824.3px;top:959.84px;font-size:12px;line-height:12px;color:#444;letter-spacing:-0.14px">Verbunden mit Microsoft Exchange</div>
<div class="a" style="left:1023px;top:955px;width:40px;height:21px;background:#d2d0ce;"></div>
<svg class="a" style="left:1036px;top:959px" width="14" height="12" viewBox="0 0 14 12"><rect x="0.6" y="0.6" width="12.8" height="10.8" fill="none" stroke="#444" stroke-width="1.2"/><path d="M0.6 3h12.8M3.5 3v8.5M10.5 3v8.5" stroke="#444" stroke-width="1.1"/></svg>
<svg class="a" style="left:1076px;top:958px" width="14" height="13" viewBox="0 0 14 13"><path d="M0.6 1h5a1.4 1.4 0 0 1 1.4 1.4V12a1.4 1.4 0 0 0-1.4-1H0.6zM13.4 1h-5A1.4 1.4 0 0 0 7 2.4V12a1.4 1.4 0 0 1 1.4-1h5z" fill="none" stroke="#444" stroke-width="1.1"/><path d="M2 4h3.3M2 6h3.3M2 8h3.3M8.7 4H12M8.7 6H12M8.7 8H12" stroke="#444" stroke-width="0.8"/></svg>
<div class="a" style="left:1109px;top:964px;width:8px;height:1px;background:#a0a0a0;"></div>
<div class="a" style="left:1122px;top:965px;width:100px;height:1px;background:#b0b0b0;"></div>
<div class="a" style="left:1172px;top:961px;width:1px;height:8px;background:#b0b0b0;"></div>
<div class="a" style="left:1226px;top:964px;width:9px;height:1px;background:#a0a0a0;"></div>
<div class="a" style="left:1230px;top:960px;width:1px;height:9px;background:#a0a0a0;"></div>
<div class="a " style="left:1247.2px;top:959.54px;font-size:12px;line-height:12px;color:#a0a0a0;letter-spacing:-0.8px">10 %</div>
<div class="a" style="left:0px;top:976px;width:1280px;height:1px;background:#e6e6e6;"></div>
<svg class="a" style="left:7px;top:981px" width="40" height="40" viewBox="0 0 40 40"><defs><radialGradient id="sg" cx="0.45" cy="0.3" r="0.75"><stop offset="0" stop-color="#6a9ea8"/><stop offset="0.55" stop-color="#2f6678"/><stop offset="1" stop-color="#0e3550"/></radialGradient><linearGradient id="sy" x1="0" y1="1" x2="1" y2="0"><stop offset="0" stop-color="#f2e23a"/><stop offset="1" stop-color="#f0902a"/></linearGradient></defs><rect x="35" y="7.5" width="2" height="3" fill="#1a7be0"/><rect x="35" y="28" width="2" height="3" fill="#1a7be0"/><circle cx="20" cy="20" r="19" fill="#9db3b9" opacity="0.55"/><circle cx="20" cy="20" r="17.2" fill="url(#sg)"/><path d="M12.8 29.6H27.2V26.2L32.93 23.16 L31.38 21.08 L32.66 18.83 L30.51 17.38 L30.98 14.83 L28.47 14.17 L28.07 11.61 L25.49 11.81 L24.28 9.52 L21.90 10.56 L20.00 8.80 L18.10 10.56 L15.72 9.52 L14.51 11.81 L11.93 11.61 L11.53 14.17 L9.02 14.83 L9.49 17.38 L7.34 18.83 L8.62 21.08 L7.07 23.16 L12.8 26.2Z" fill="#3f8fa0"/><g fill="none" stroke="#6cc0cc" stroke-width="1.2" opacity="0.85"><path d="M10.5 24a9.5 9.5 0 0 1 19 0"/><path d="M13.5 25.5a6.5 6.5 0 0 1 13 0"/><path d="M16.8 27a3.2 3.2 0 0 1 6.4 0"/></g><path d="M12.8 29.6H27.2V26.2L32.93 23.16 L31.38 21.08 L32.66 18.83 L30.51 17.38 L30.98 14.83 L28.47 14.17 L28.07 11.61 L25.49 11.81 L24.28 9.52 L21.90 10.56 L20.00 8.80 L18.10 10.56 L15.72 9.52 L14.51 11.81 L11.93 11.61 L11.53 14.17 L9.02 14.83 L9.49 17.38 L7.34 18.83 L8.62 21.08 L7.07 23.16 L12.8 26.2Z" fill="none" stroke="url(#sy)" stroke-width="1.3" stroke-linejoin="round"/></svg>
<svg class="a" style="left:64px;top:988px" width="25" height="23" viewBox="0 0 25 23"><rect x="7" y="0.5" width="17.5" height="15" fill="#f7f7f7" stroke="#e0e0e0" stroke-width="0.6"/><rect x="1" y="7" width="17" height="16" fill="#1e1e1e"/><rect x="7" y="7" width="11" height="9" fill="#bdbdbd"/></svg>
<svg class="a" style="left:108px;top:988px" width="26" height="23" viewBox="0 0 26 23"><path d="M0.5 2a1.5 1.5 0 0 1 1.5-1.5h7l2 2.5h13a1.5 1.5 0 0 1 1.5 1.5V22H0.5z" fill="#e5a91f"/><path d="M0.5 5.5h25V22H0.5z" fill="#fbc93d"/><rect x="5" y="15" width="16" height="7.5" rx="1.5" fill="#2a86d9"/></svg>
<svg class="a" style="left:152px;top:988px" width="26" height="23" viewBox="0 0 26 23"><rect x="9" y="0.5" width="16" height="13" fill="#1490df"/><rect x="17" y="0.5" width="8" height="6.5" fill="#50d9ff"/><rect x="9" y="7" width="8" height="6.5" fill="#0364b8"/><path d="M9 11l8 5 8-5v11.5H9z" fill="#28a8ea"/><path d="M9 22.5l8-6.5 8 6.5z" fill="#0a6fc9"/><rect x="0.5" y="5.5" width="13" height="13" rx="1" fill="#0f62b4"/><ellipse cx="7" cy="12" rx="3.3" ry="4" fill="none" stroke="#fff" stroke-width="1.8"/></svg>
<div class="a" style="left:162px;top:1016px;width:6px;height:3px;background:#888;border-radius:1.5px"></div>
<svg class="a" style="left:197px;top:988px" width="24" height="24" viewBox="0 0 24 24"><path d="M0.5 1.5a1 1 0 0 1 1-1h19l3 3v19a1 1 0 0 1-1 1H1.5a1 1 0 0 1-1-1z" fill="#1f3fb0" stroke="#142a80" stroke-width="0.6"/><rect x="5" y="0.8" width="13" height="7" fill="#cfd3dc"/><rect x="11.5" y="1.8" width="3.5" height="5" fill="#1f3fb0"/><rect x="3.5" y="11" width="17" height="11.5" fill="#fff"/><path d="M4 13.5h16M4 16h16M4 18.5h16" stroke="#e67d8c" stroke-width="0.9"/><text x="14.5" y="22" font-size="4.5" font-family="Liberation Sans" fill="#222">01</text></svg>
<svg class="a" style="left:240px;top:987px" width="26" height="26" viewBox="0 0 26 26"><circle cx="13" cy="13" r="12.3" fill="#db4437"/><path d="M13 13L2.35 6.85A12.3 12.3 0 0 0 13 25.3z" fill="#0f9d58"/><path d="M13 13v12.3A12.3 12.3 0 0 0 23.65 6.85z" fill="#ffcd40"/><path d="M13 13L2.35 6.85A12.3 12.3 0 0 1 23.65 6.85z" fill="#db4437"/><path d="M13 7.6h10.65A12.3 12.3 0 0 1 13 25.3L18 14z" fill="#ffcd40"/><path d="M13 25.3A12.3 12.3 0 0 1 2.35 6.85L8 15z" fill="#0f9d58"/><circle cx="13" cy="13" r="5.6" fill="#fff"/><circle cx="13" cy="13" r="4.4" fill="#4285f4"/></svg>
<svg class="a" style="left:1054px;top:995px" width="14" height="9" viewBox="0 0 14 9"><path d="M1 8l6-6 6 6" stroke="#222" stroke-width="1.3" fill="none"/></svg>
<div class="a " style="left:1083.6px;top:986.64px;font-size:12px;line-height:12px;color:#1b1b1b;letter-spacing:-0.8px">ENG</div>
<div class="a " style="left:1088.6px;top:1002.64px;font-size:12px;line-height:12px;color:#1b1b1b;letter-spacing:-0.6px">DE</div>
<svg class="a" style="left:1125px;top:991px" width="17" height="18" viewBox="0 0 17 18"><path d="M10 4H0.6v10h12.5V10" fill="none" stroke="#222" stroke-width="1.1"/><path d="M6.8 14v3M3 17h7.5" stroke="#222" stroke-width="1.1"/><rect x="11" y="0.6" width="4.5" height="7" rx="2.2" fill="none" stroke="#222" stroke-width="1.1"/><path d="M13.2 7.6V13" stroke="#222" stroke-width="1.1"/></svg>
<svg class="a" style="left:1149px;top:994px" width="17" height="13" viewBox="0 0 17 13"><path d="M0.6 4.3h3L7.5 1v11L3.6 8.7h-3z" fill="none" stroke="#222" stroke-width="1.1"/><path d="M10 4.3a3 3 0 0 1 0 4.4M12 2.6a5.5 5.5 0 0 1 0 7.8M14 1a8 8 0 0 1 0 11" fill="none" stroke="#222" stroke-width="1.1"/></svg>
<div class="a " style="left:1209px;top:986.24px;font-size:12px;line-height:12px;color:#1b1b1b;letter-spacing:-0.55px">12:34</div>
<div class="a " style="left:1180.5px;top:1001.54px;font-size:12px;line-height:12px;color:#1b1b1b;letter-spacing:-0.45px">15.05.2023</div>
<div class="a" style="left:1244px;top:992px;width:16.5px;height:16.5px;background:#0f6cbd;border-radius:50%"></div>
<div class="a " style="left:1249px;top:995.19px;font-size:11px;line-height:11px;color:#fff;">1</div>
</div><!--BOTTOMEND-->
</body></html>
